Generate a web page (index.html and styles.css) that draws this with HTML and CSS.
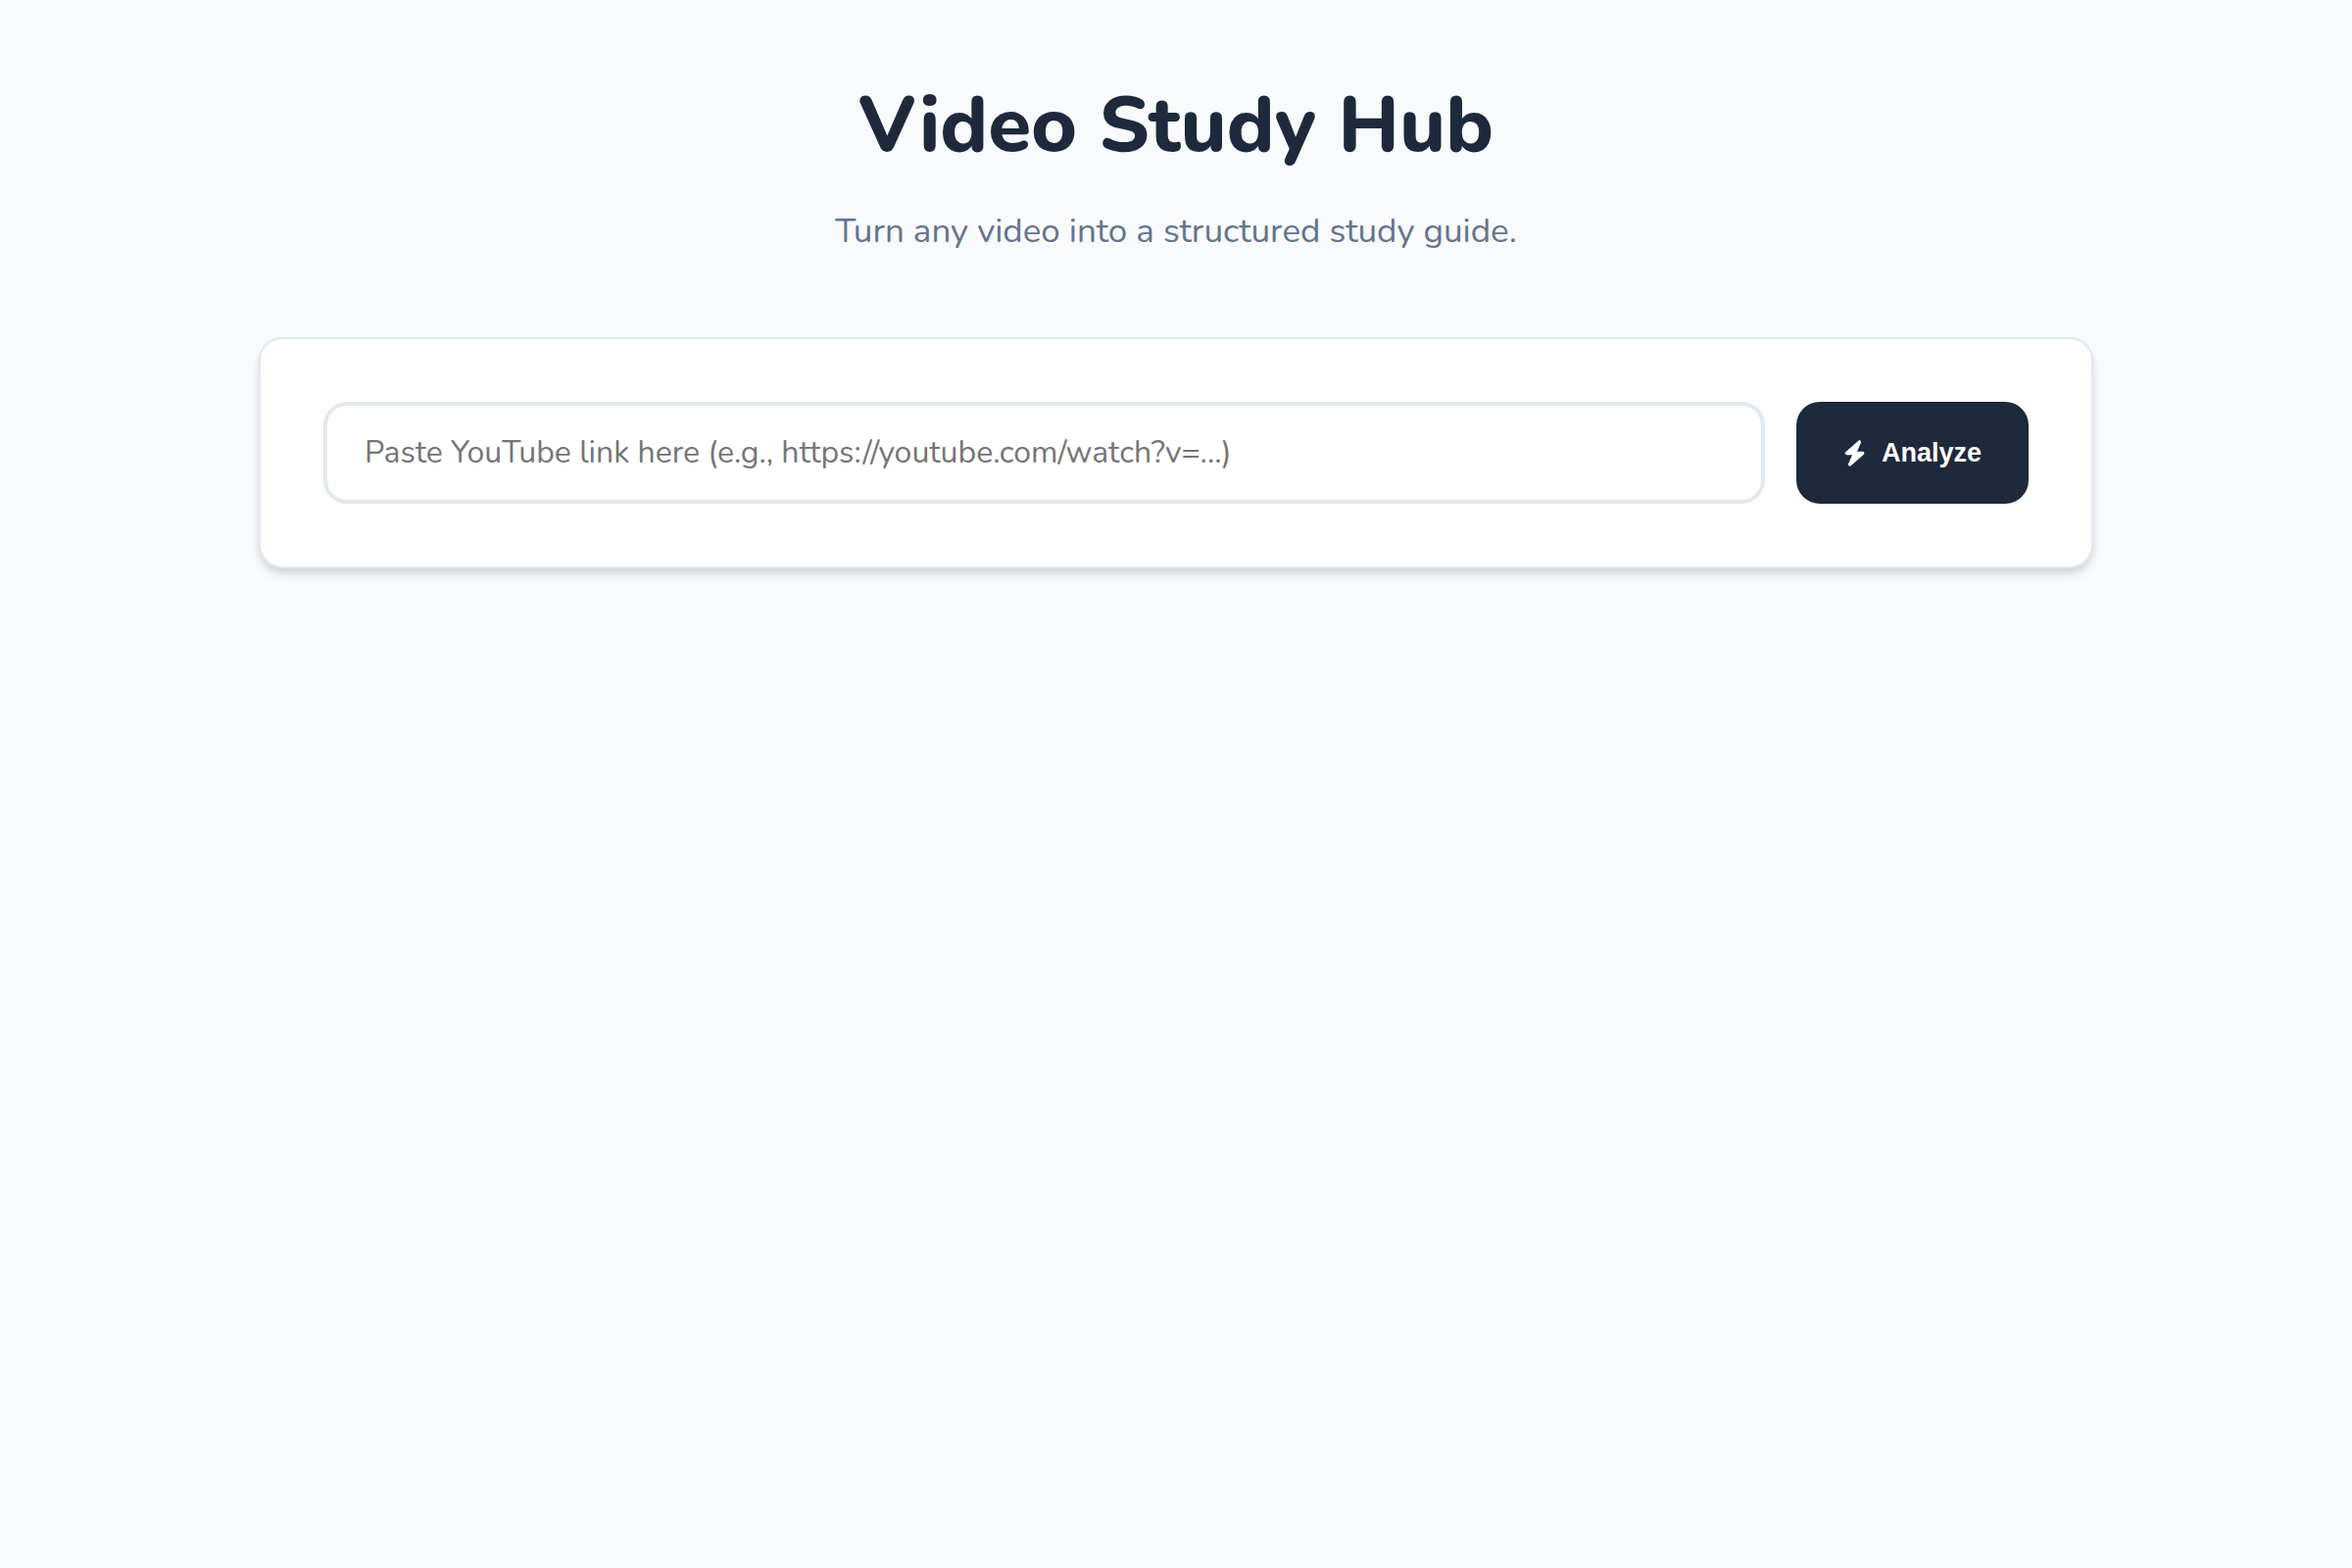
FILE: index.html
```html
<!DOCTYPE html>
<html lang="en">
<head>
  <meta charset="UTF-8">
  <meta name="viewport" content="width=device-width, initial-scale=1.0">
  <title>Video Study Hub</title>
  <link rel="stylesheet" href="styles.css">
</head>
<body>
  <div class="container">
    <header>
      <h1>Video Study Hub</h1>
      <p class="subtitle">Turn any video into a structured study guide.</p>
    </header>

    <form class="card input-group" onsubmit="return false">
      <input type="text" id="video-url" class="url-input" aria-label="YouTube link" placeholder="Paste YouTube link here (e.g., https://youtube.com/watch?v=...)">
      <button type="submit" class="analyze-btn">
        <svg class="icon" viewBox="0 0 448 512" aria-hidden="true">
          <path d="M349.4 44.6c5.9-13.7 1.5-29.7-10.6-38.5s-28.6-8-39.9 1.8l-256 224c-10 8.8-13.6 22.9-8.9 35.3S50.7 288 64 288H175.5L98.6 467.4c-5.9 13.7-1.5 29.7 10.6 38.5s28.6 8 39.9-1.8l256-224c10-8.8 13.6-22.9 8.9-35.3s-16.6-20.7-30-20.7H272.5L349.4 44.6z"/>
        </svg>
        Analyze
      </button>
    </form>
  </div>
</body>
</html>
```
FILE: styles.css
```css
:root {
  --primary: #1e293b;
  --muted: #64748b;
  --bg: #f8fafc;
  --border: #e2e8f0;
}
* {
  box-sizing: border-box;
}
body {
  margin: 0;
  font-family: Nunito, Lato, sans-serif;
  background: var(--bg);
  color: var(--primary);
}
.container {
  max-width: 2000px;
  margin: 0 auto;
  padding: 64px;
}
header {
  text-align: center;
  margin-bottom: 80px;
}
h1 {
  margin: 0 0 16px;
  font-size: 80px;
  line-height: 128px;
  font-weight: 800;
}
.subtitle {
  margin: 0;
  font-size: 35px;
  line-height: 56px;
  color: var(--muted);
}
.card {
  background: white;
  padding: 64px;
  border: 2px solid var(--border);
  border-radius: 24px;
  box-shadow: 0 8px 12px -2px rgba(0, 0, 0, 0.1), 0 4px 8px -2px rgba(0, 0, 0, 0.1);
}
.input-group {
  display: flex;
  gap: 32px;
}
.url-input {
  flex: 1;
  min-width: 0;
  padding: 26px 38px;
  border: 4px solid var(--border);
  border-radius: 24px;
  background: white;
  color: var(--primary);
  font-family: inherit;
  font-size: 32px;
  line-height: 44px;
  outline: none;
}
.url-input::placeholder {
  color: #757575;
}
.url-input:focus {
  border-color: var(--primary);
}
.analyze-btn {
  display: flex;
  align-items: center;
  gap: 16px;
  padding: 0 48px;
  border: none;
  border-radius: 24px;
  background: var(--primary);
  color: white;
  font-family: "Liberation Sans", Arial, sans-serif;
  font-size: 27px;
  line-height: 30px;
  font-weight: 700;
  cursor: pointer;
}
.icon {
  width: 23px;
  height: 27px;
  fill: currentColor;
}
```
